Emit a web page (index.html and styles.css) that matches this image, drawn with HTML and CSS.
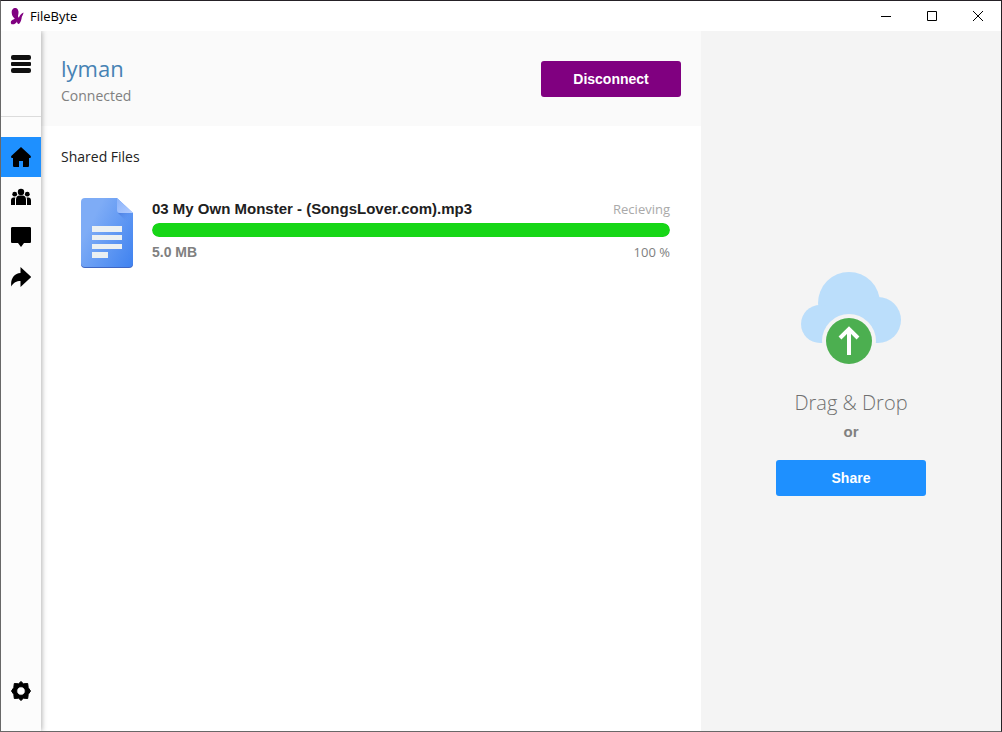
FILE: index.html
```html
<!DOCTYPE html>
<html lang="en">
<head>
<meta charset="utf-8">
<title>FileByte</title>
<link rel="stylesheet" href="styles.css">
</head>
<body>
<div class="window">
  <header class="titlebar">
    <svg class="logo" viewBox="0 0 14 18" aria-hidden="true"><path fill="#800080" d="M2.500 2.500C4 .5 7 .5 8 3c1 2 .4 4 0 6 .2 1 .6 1.500 1 1.500C9.500 8.500 11 6.500 13.500 5.500c0 2-1.300 3-1.700 4.500-.2 2.500-1 5-2.800 7-1.300.2-2-1-2-2.500-1 2-3 3.300-5.500 2.700C.4 16 .6 14 2 13.200c1-.8 2-1 2.800-1.800C3 10.500 2 8.500 1.800 6.500 1.600 5 1.600 3.500 2.500 2.500z"/></svg>
    <span class="app-name">FileByte</span>
    <div class="controls">
      <button class="control" aria-label="Minimize"><svg viewBox="0 0 12 12"><path d="M1 6.500h10"/></svg></button>
      <button class="control" aria-label="Maximize"><svg viewBox="0 0 12 12"><path d="M1.500 1.500h9v9h-9z"/></svg></button>
      <button class="control" aria-label="Close"><svg viewBox="0 0 12 12"><path d="M1 1l10 10M11 1L1 11"/></svg></button>
    </div>
  </header>
  <div class="body">
    <nav class="sidebar">
      <div class="menu">
        <button class="nav-item" aria-label="Menu"><svg viewBox="0 0 20 20"><g fill="#101010"><rect y="1" width="20" height="5" rx="2"/><rect y="8" width="20" height="4" rx="1"/><rect y="14" width="20" height="5" rx="2"/></g></svg></button>
      </div>
      <button class="nav-item active" aria-label="Home"><svg viewBox="0 0 20 20"><path d="M10 0l9.500 8.700c.8.900.4 2.300-.9 2.300H18v7.500c0 1-.5 1.500-1.500 1.500H12v-6H8v6H3.500C2.500 20 2 19.500 2 18.500V11h-.6C.1 11-.3 9.600.5 8.700z"/></svg></button>
      <button class="nav-item" aria-label="People"><svg viewBox="0 0 20 20"><circle cx="10" cy="5" r="3.200"/><circle cx="3.700" cy="7.200" r="2.400"/><circle cx="16.300" cy="7.200" r="2.400"/><path d="M5 18v-5.500C5 10 6.500 8.500 8.500 8.500h3c2 0 3.500 1.500 3.500 4V18zM0 18v-4.500C0 11.500 1 10.500 2.500 10.500H4.500C4 11.500 4 12 4 13v5zM16 18v-5c0-1 0-1.500-.5-2.500h2c1.500 0 2.500 1 2.500 3V18z"/></svg></button>
      <button class="nav-item" aria-label="Messages"><svg viewBox="0 0 20 20"><path d="M1.500 0h17C19.500 0 20 .5 20 1.500v13c0 1-.5 1.500-1.500 1.500H13l-3 4-3-4H1.500C.5 16 0 15.500 0 14.500v-13C0 .5.500 0 1.500 0z"/></svg></button>
      <button class="nav-item" aria-label="Share files"><svg viewBox="0 0 20 20"><path d="M9.500 0L20.200 10 9.500 20v-6C5.500 14 2.500 15.500.3 19.500-.8 12 3 6.500 9.500 6z"/></svg></button>
      <button class="nav-item settings" aria-label="Settings"><svg viewBox="0 0 20 20"><path fill-rule="evenodd" stroke="#000" stroke-linejoin="round" d="M10 .5l2.400 2.300 4.300-.3.500 4.100L19.500 10l-2.300 3.400-.5 4.100-4.300-.3L10 19.500l-2.400-2.300-4.300.3-.5-4.100L.5 10l2.300-3.400.5-4.100 4.300.3zM10 5.700a4.300 4.300 0 1 0 0 8.600 4.300 4.300 0 0 0 0-8.600z"/></svg></button>
    </nav>
    <main class="content">
      <section class="peer">
        <div>
          <h1 class="peer-name">lyman</h1>
          <p class="peer-status">Connected</p>
        </div>
        <button class="button disconnect">Disconnect</button>
      </section>
      <section class="files">
        <h2 class="files-title">Shared Files</h2>
        <article class="file">
          <svg class="file-icon" viewBox="0 0 52 70" aria-hidden="true">
            <defs>
              <linearGradient id="paper" x1="0" y1=".2" x2="1" y2=".9"><stop offset=".2" stop-color="#7eacf6"/><stop offset="1" stop-color="#4284f0"/></linearGradient>
              <linearGradient id="fold" x1="0" y1="0" x2="1" y2="1"><stop offset="0" stop-color="#8ab2fa"/><stop offset="1" stop-color="#b2ccff"/></linearGradient>
              <linearGradient id="shade" x1="0" y1="0" x2="1" y2="1"><stop offset="0" stop-color="#4a7de0"/><stop offset=".6" stop-color="#5c94f2" stop-opacity="0"/></linearGradient>
            </defs>
            <path fill="#3f66c4" d="M0 60h52v6a4 4 0 0 1-4 4H4a4 4 0 0 1-4-4z"/>
            <path fill="url(#paper)" d="M4 0h32l16 15v50a4 4 0 0 1-4 4H4a4 4 0 0 1-4-4V4a4 4 0 0 1 4-4z"/>
            <path fill="url(#shade)" d="M37 15h15v15z"/>
            <path fill="url(#fold)" d="M36 0l16 15H39a3 3 0 0 1-3-3z"/>
            <path fill="#ebf0f2" d="M11 28h30v6H11zM11 37h30v5H11zM11 46h30v5H11zM11 54h16v6H11z"/>
          </svg>
          <div class="file-info">
            <div class="file-row">
              <strong class="file-name">03 My Own Monster - (SongsLover.com).mp3</strong>
              <span class="file-state">Recieving</span>
            </div>
            <div class="progress" role="progressbar" aria-label="Transfer progress" aria-valuenow="100" aria-valuemin="0" aria-valuemax="100"><div class="progress-bar" style="width: 100%"></div></div>
            <div class="file-row">
              <strong class="file-size">5.0 MB</strong>
              <span class="file-percent">100 %</span>
            </div>
          </div>
        </article>
      </section>
    </main>
    <aside class="drop">
      <svg class="cloud" viewBox="0 0 100 92" aria-hidden="true">
        <g fill="#bbdefb"><circle cx="48" cy="31" r="31"/><circle cx="19" cy="52" r="19"/><circle cx="77" cy="48" r="23"/><path d="M19 35h58v36H19z"/></g>
        <circle cx="48" cy="69" r="27" fill="#f4f4f4"/>
        <circle cx="48" cy="69" r="23" fill="#4caf50"/>
        <path fill="none" stroke="#fff" stroke-width="4" d="M48 83V57M39 66l9-9 9 9"/>
      </svg>
      <p class="drop-title">Drag &amp; Drop</p>
      <p class="drop-or">or</p>
      <button class="button share">Share</button>
    </aside>
  </div>
</div>
</body>
</html>
```
FILE: styles.css
```css
* { box-sizing: border-box; }
body { margin: 0; font-family: "Open Sans", "Noto Sans", sans-serif; }
h1, h2, p { margin: 0; font-weight: 400; }
button { border: 0; padding: 0; background: none; }

.window { display: flex; flex-direction: column; min-height: 100vh; border: 1px solid #686868; border-top-color: #252126; border-right-color: #252126; background: #fff; }

.titlebar { display: flex; align-items: center; height: 30px; padding-left: 9px; }
.logo { width: 14px; height: 18px; }
.app-name { margin-left: 6px; font-size: 13px; line-height: 16px; color: #000; }
.controls { display: flex; margin-left: auto; }
.control { display: flex; align-items: center; justify-content: center; width: 46px; height: 30px; }
.control svg { width: 12px; height: 12px; fill: none; stroke: #000; }

.body { display: flex; flex: 1; overflow: hidden; }

.sidebar { position: relative; display: flex; flex-direction: column; width: 40px; padding-bottom: 20px; background: #fcfcfc; box-shadow: 1px 0 5px rgba(0, 0, 0, 0.3); }
.menu { height: 86px; margin-bottom: 20px; padding-top: 13px; border-bottom: 1px solid #dcdcdc; }
.nav-item { display: flex; align-items: center; justify-content: center; width: 40px; height: 40px; }
.nav-item svg { width: 20px; height: 20px; }
.active { background: #1e90ff; }
.settings { margin-top: auto; }

.content { flex: 1; min-width: 0; }
.peer { display: flex; align-items: flex-start; justify-content: space-between; height: 95px; padding: 20px 20px 0; background: #fafafa; }
.peer-name { font-size: 22px; line-height: 34px; color: #4682b4; }
.peer-status { font-size: 14px; line-height: 22px; color: #808080; }
.button { height: 36px; border-radius: 3px; color: #fff; font: bold 14px/20px "Liberation Sans", Arial, sans-serif; }
.disconnect { width: 140px; margin-top: 10px; background: #800080; }

.files { padding: 20px; }
.files-title { font-size: 14px; line-height: 22px; color: #222; }
.file { display: flex; gap: 19px; padding: 30px 11px 0 20px; }
.file-icon { flex: none; width: 52px; height: 70px; }
.file-info { flex: 1; min-width: 0; }
.file-row { display: flex; align-items: center; justify-content: space-between; height: 22px; }
.file-name { font: bold 15px/20px "Liberation Sans", Arial, sans-serif; color: #202020; }
.file-state { font-size: 13px; line-height: 20px; color: #a9a9a9; }
.progress { height: 14px; margin: 3px 0 4px; overflow: hidden; border-radius: 7px; background: #e6e6e6; }
.progress-bar { height: 100%; border-radius: 7px; background: #16d616; }
.file-size { font: bold 14px/20px "Liberation Sans", Arial, sans-serif; color: #808080; }
.file-percent { font-size: 13px; line-height: 20px; color: #808080; }

.drop { display: flex; flex-direction: column; align-items: center; justify-content: center; width: 300px; padding-top: 6px; background: #f4f4f4; }
.cloud { width: 100px; height: 92px; }
.drop-title { margin-top: 24px; font-size: 20px; font-weight: 300; line-height: 30px; color: #707070; }
.drop-or { margin: 4px 0 18px; font: bold 15px/20px "Liberation Sans", Arial, sans-serif; color: #808080; }
.share { width: 150px; background: #1e90ff; }
```
